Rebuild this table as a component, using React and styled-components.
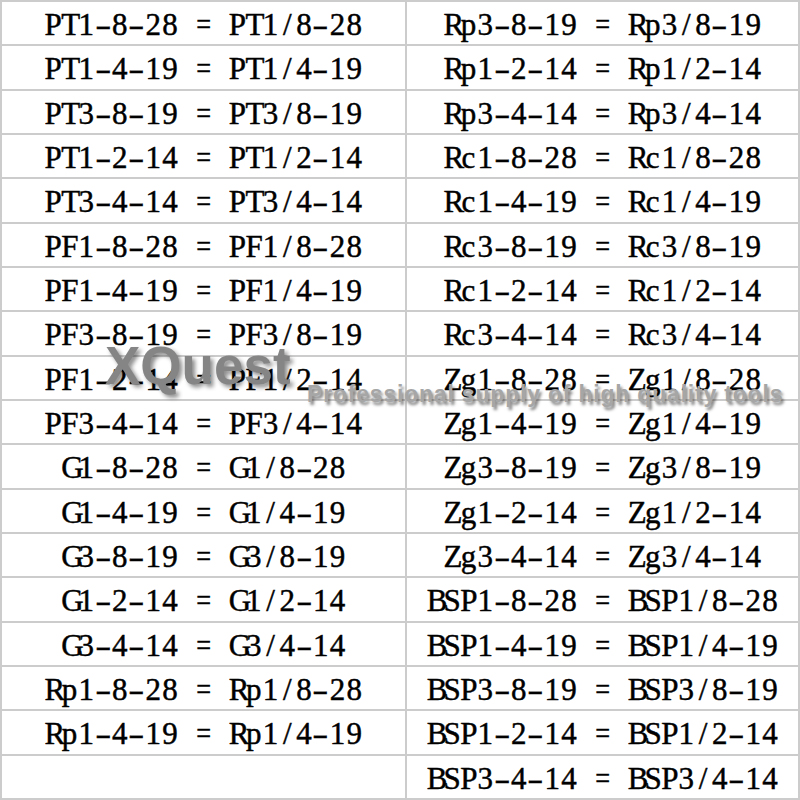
import React from "react";
import styled, { createGlobalStyle } from "styled-components";

const GlobalStyle = createGlobalStyle`
  html, body {
    margin: 0;
    padding: 0;
    background: #ffffff;
  }
`;

const Sheet = styled.div`
  position: relative;
  width: 800px;
  height: 800px;
  box-sizing: border-box;
  display: grid;
  grid-template-columns: 405px 1fr;
  grid-template-rows: repeat(18, 1fr);
  border-top: 2px solid #cccccc;
  border-left: 2px solid #cccccc;
  overflow: hidden;
  font-family: "Liberation Serif", "Times New Roman", serif;
  color: #000;
`;

const Cell = styled.div`
  display: flex;
  align-items: center;
  justify-content: center;
  border-right: 2px solid #cccccc;
  border-bottom: 2px solid #cccccc;
  padding-top: 3px;
  font-size: 31px;
  line-height: 1;
  white-space: nowrap;
  -webkit-text-stroke: 0.45px #000;
`;

const Glyph = styled.span`
  display: inline-block;
  width: 16.75px;
  text-align: center;
  white-space: pre;
  transform: ${(p) => (p.$dash ? "scaleX(1.55)" : p.$eq ? "scaleX(0.85)" : "none")};
`;

const Brand = styled.div`
  position: absolute;
  left: 103px;
  top: 337px;
  font-family: "Liberation Sans", Arial, sans-serif;
  font-weight: bold;
  font-size: 53px;
  line-height: 1;
  color: #858585;
  text-shadow: 3px 3px 4px rgba(0, 0, 0, 0.45);
  pointer-events: none;
`;

const Tagline = styled.div`
  position: absolute;
  left: 305px;
  top: 381px;
  font-family: "Liberation Sans", Arial, sans-serif;
  font-weight: bold;
  font-size: 23px;
  letter-spacing: 0.8px;
  line-height: 1;
  color: #a6a6a6;
  text-shadow: 2px 3px 3px rgba(0, 0, 0, 0.5);
  white-space: nowrap;
  pointer-events: none;
`;

const left = [
  "PT1-8-28", "PT1-4-19", "PT3-8-19", "PT1-2-14", "PT3-4-14",
  "PF1-8-28", "PF1-4-19", "PF3-8-19", "PF1-2-14", "PF3-4-14",
  "G1-8-28", "G1-4-19", "G3-8-19", "G1-2-14", "G3-4-14",
  "Rp1-8-28", "Rp1-4-19", "",
];

const right = [
  "Rp3-8-19", "Rp1-2-14", "Rp3-4-14",
  "Rc1-8-28", "Rc1-4-19", "Rc3-8-19", "Rc1-2-14", "Rc3-4-14",
  "Zg1-8-28", "Zg1-4-19", "Zg3-8-19", "Zg1-2-14", "Zg3-4-14",
  "BSP1-8-28", "BSP1-4-19", "BSP3-8-19", "BSP1-2-14", "BSP3-4-14",
];

// "PT1-8-28" -> "PT1-8-28 = PT1/8-28"
function label(code) {
  if (!code) return "";
  return `${code} = ${code.replace("-", "/")}`;
}

function Thread({ code }) {
  const text = label(code);
  return (
    <Cell>
      {text.split("").map((ch, i) => (
        <Glyph key={i} $dash={ch === "-"} $eq={ch === "="}>
          {ch}
        </Glyph>
      ))}
    </Cell>
  );
}

export default function App() {
  return (
    <>
      <GlobalStyle />
      <Sheet>
        {left.map((code, i) => (
          <React.Fragment key={i}>
            <Thread code={code} />
            <Thread code={right[i]} />
          </React.Fragment>
        ))}
        <Brand>XQuest</Brand>
        <Tagline>Professional supply of high quality tools</Tagline>
      </Sheet>
    </>
  );
}
